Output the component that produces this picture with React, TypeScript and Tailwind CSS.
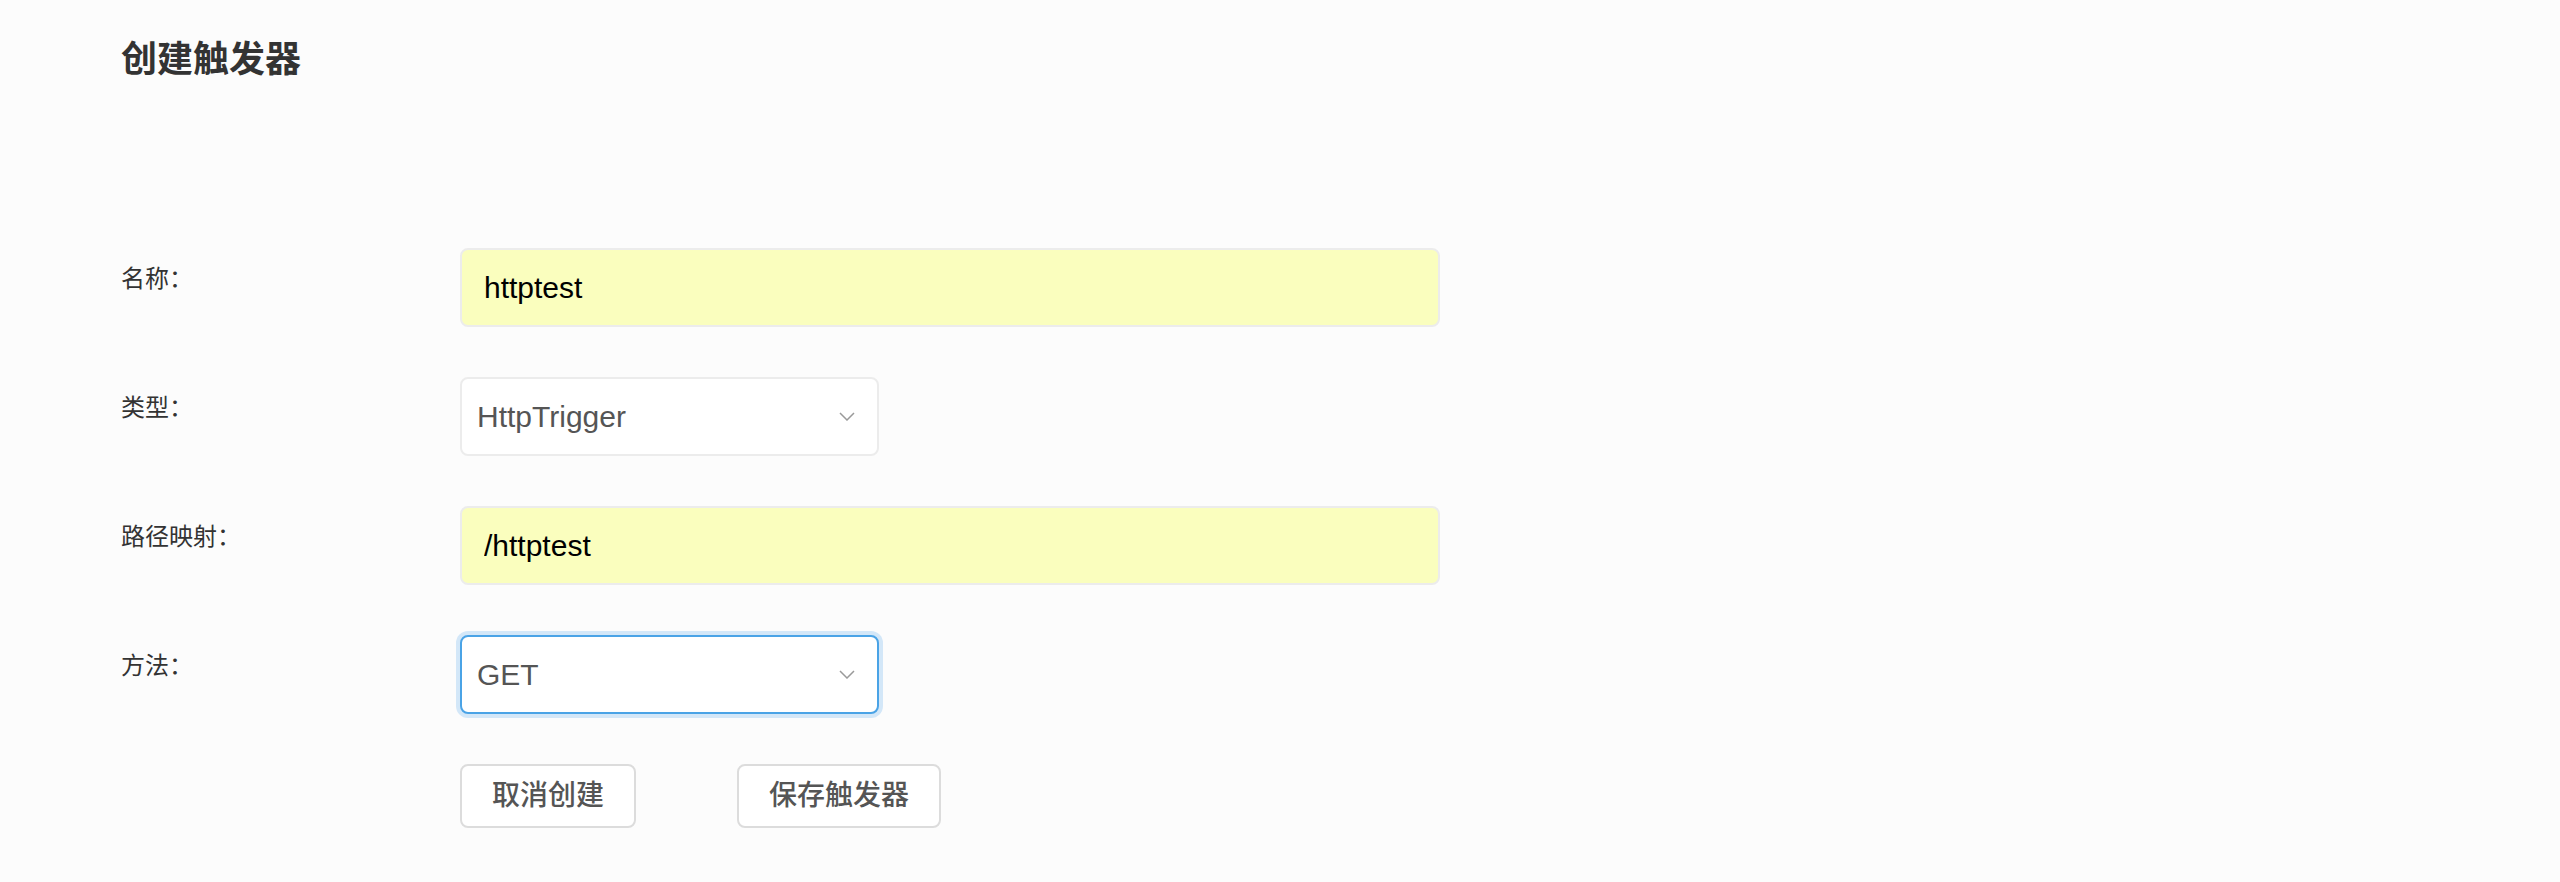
import React from 'react';

const font = { fontFamily: '"Liberation Sans", "Noto Sans CJK SC", sans-serif' };

function Chevron() {
  return (
    <svg width="16" height="9" viewBox="0 0 16 9" fill="none" className="shrink-0">
      <path d="M1 1 L8 8 L15 1" stroke="#9a9a9a" strokeWidth="1.5" />
    </svg>
  );
}

function Row({ label, children }: { label: string; children: React.ReactNode }) {
  return (
    <div className="flex items-start">
      <div className="w-[339px] shrink-0 pt-[19px] text-[24px] leading-[24px] text-[#333]">{label}</div>
      {children}
    </div>
  );
}

function TextField({ value }: { value: string }) {
  return (
    <input
      readOnly
      value={value}
      style={font}
      className="w-[980px] h-[79px] px-[22px] bg-[#fafebe] border-2 border-[#ececec] rounded-[8px] text-[30px] text-black outline-none"
    />
  );
}

function SelectBox({ value, focused }: { value: string; focused?: boolean }) {
  return (
    <div
      className={
        focused
          ? 'w-[419px] h-[79px] pl-[15px] pr-[22px] bg-white border-2 border-[#4aa3e6] rounded-[8px] flex items-center justify-between shadow-[0_0_0_4px_#d3e7f8]'
          : 'w-[419px] h-[79px] pl-[15px] pr-[22px] bg-white border-2 border-[#ececec] rounded-[8px] flex items-center justify-between'
      }
    >
      <span className="text-[30px] text-[#555]">{value}</span>
      <Chevron />
    </div>
  );
}

export default function App() {
  return (
    <div className="min-h-[882px] bg-[#fcfcfc] pl-[121px] pt-[42px]" style={font}>
      <h1 className="text-[36px] leading-[36px] font-bold text-[#333]">创建触发器</h1>

      <div className="mt-[170px] flex flex-col gap-[50px]">
        <Row label="名称：">
          <TextField value="httptest" />
        </Row>
        <Row label="类型：">
          <SelectBox value="HttpTrigger" />
        </Row>
        <Row label="路径映射：">
          <TextField value="/httptest" />
        </Row>
        <Row label="方法：">
          <SelectBox value="GET" focused />
        </Row>

        <div className="flex">
          <div className="w-[339px] shrink-0" />
          <div className="flex gap-[101px]">
            <button className="h-[64px] px-[30px] bg-white border-2 border-[#dcdcdc] rounded-[8px] text-[28px] font-medium text-[#555]">
              取消创建
            </button>
            <button className="h-[64px] px-[30px] bg-white border-2 border-[#dcdcdc] rounded-[8px] text-[28px] font-medium text-[#555]">
              保存触发器
            </button>
          </div>
        </div>
      </div>
    </div>
  );
}
